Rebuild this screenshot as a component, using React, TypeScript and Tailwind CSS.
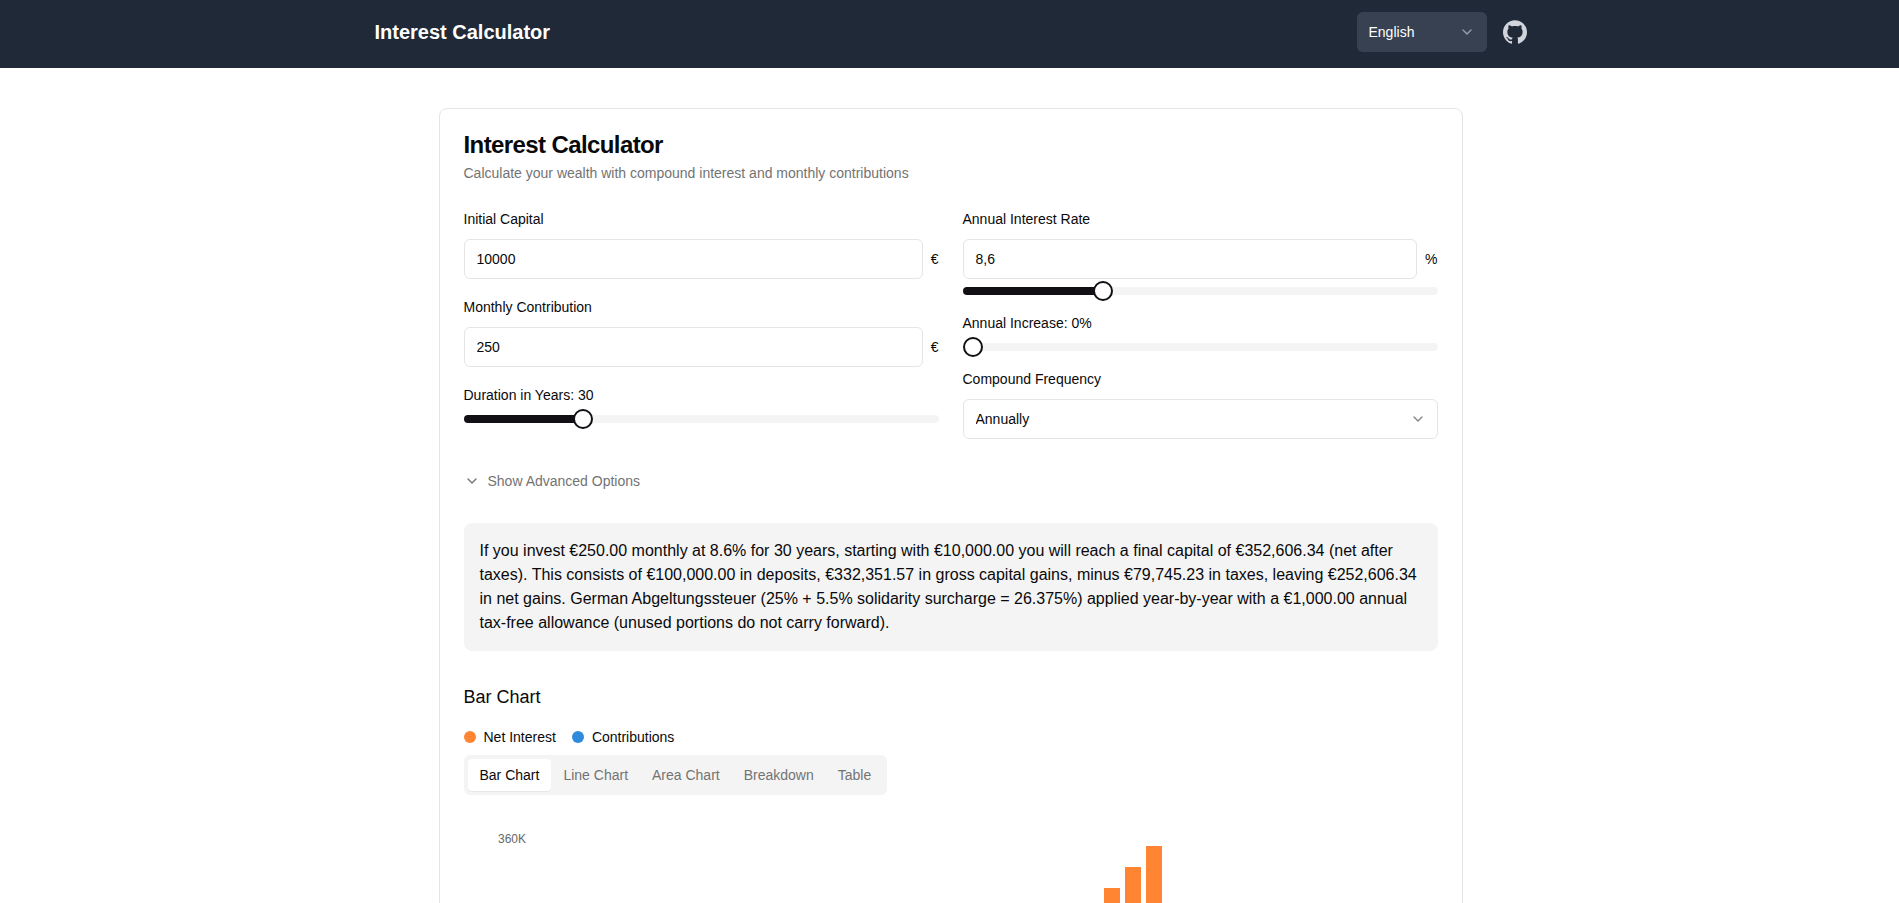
import { useState } from "react";
import type { ReactNode } from "react";
import { ChevronDown } from "lucide-react";

const INITIAL = 10000;
const MONTHLY = 250;
const AXIS_MAX = 360000;
const PLOT_TOP = 28;
const PLOT_HEIGHT = 324;

type YearRow = { year: number; total: number; deposits: number };

function buildRows(): YearRow[] {
  const rows: YearRow[] = [];
  let total = 352606;
  for (let year = 30; year >= 1; year--) {
    rows.unshift({ year, total, deposits: INITIAL + MONTHLY * 12 * year });
    total = (total - 3364) / 1.06332;
  }
  return rows;
}

const rows = buildRows();

function Field({ label, htmlFor, children }: { label: string; htmlFor: string; children: ReactNode }) {
  return (
    <div className="flex flex-col gap-2">
      <div className="flex h-6 items-center">
        <label htmlFor={htmlFor} className="text-sm leading-none">
          {label}
        </label>
      </div>
      {children}
    </div>
  );
}

function NumberInput({ id, value, unit, onChange }: { id: string; value: string; unit: string; onChange: (v: string) => void }) {
  return (
    <div className="flex items-center gap-2">
      <input
        id={id}
        type="text"
        inputMode="decimal"
        value={value}
        onChange={(e) => onChange(e.target.value)}
        className="h-10 min-w-0 flex-1 rounded-md border border-[#e5e5e5] bg-white px-3 py-2 text-sm"
      />
      <span className="text-sm">{unit}</span>
    </div>
  );
}

type SliderProps = { id?: string; label?: string; value: number; max: number; step: number; onChange: (v: number) => void };

function Slider({ id, label, value, max, step, onChange }: SliderProps) {
  const percent = (value / max) * 100;
  const fill = value === 0 ? 0 : percent + 1;
  return (
    <input
      id={id}
      aria-label={label}
      type="range"
      min={0}
      max={max}
      step={step}
      value={value}
      onChange={(e) => onChange(Number(e.target.value))}
      style={{ backgroundImage: `linear-gradient(to right, #121014 ${fill}%, #f4f4f4 ${fill}%)` }}
      className="block h-2 w-full cursor-pointer appearance-none rounded-full [&::-webkit-slider-thumb]:size-5 [&::-webkit-slider-thumb]:appearance-none [&::-webkit-slider-thumb]:rounded-full [&::-webkit-slider-thumb]:border-2 [&::-webkit-slider-thumb]:border-solid [&::-webkit-slider-thumb]:border-[#121014] [&::-webkit-slider-thumb]:bg-white"
    />
  );
}

function GithubMark() {
  return (
    <svg viewBox="0 0 24 24" fill="currentColor" className="size-6" aria-hidden="true">
      <path
        fillRule="evenodd"
        clipRule="evenodd"
        d="M12 .297c-6.63 0-12 5.373-12 12 0 5.303 3.438 9.8 8.205 11.385.6.113.82-.258.82-.577 0-.285-.01-1.04-.015-2.04-3.338.724-4.042-1.61-4.042-1.61C4.422 18.07 3.633 17.7 3.633 17.7c-1.087-.744.084-.729.084-.729 1.205.084 1.838 1.236 1.838 1.236 1.07 1.835 2.809 1.305 3.495.998.108-.776.417-1.305.76-1.605-2.665-.3-5.466-1.332-5.466-5.93 0-1.31.465-2.38 1.235-3.22-.135-.303-.54-1.523.105-3.176 0 0 1.005-.322 3.3 1.23.96-.267 1.98-.399 3-.405 1.02.006 2.04.138 3 .405 2.28-1.552 3.285-1.23 3.285-1.23.645 1.653.24 2.873.12 3.176.765.84 1.23 1.91 1.23 3.22 0 4.61-2.805 5.625-5.475 5.92.42.36.81 1.096.81 2.22 0 1.606-.015 2.896-.015 3.286 0 .315.21.69.825.57C20.565 22.092 24 17.592 24 12.297c0-6.627-5.373-12-12-12"
      />
    </svg>
  );
}

function Header() {
  return (
    <header className="bg-[#1f2937] pt-3 pb-4 pl-0.5 text-white">
      <div className="mx-auto flex max-w-6xl items-center justify-between">
        <span className="text-xl font-semibold">Interest Calculator</span>
        <div className="flex items-center gap-4">
          <div className="grid items-center">
            <select
              aria-label="Language"
              defaultValue="en"
              className="col-start-1 row-start-1 h-10 w-[130px] appearance-none rounded-md bg-[#374151] px-3 text-sm"
            >
              <option value="en">English</option>
              <option value="de">Deutsch</option>
            </select>
            <ChevronDown className="pointer-events-none col-start-1 row-start-1 mr-3 size-4 justify-self-end opacity-50" />
          </div>
          <a href="#github" aria-label="GitHub" className="text-[#d1d5db]">
            <GithubMark />
          </a>
        </div>
      </div>
    </header>
  );
}

function BarChart() {
  const scale = (v: number) => (v / AXIS_MAX) * PLOT_HEIGHT;
  const base = PLOT_TOP + PLOT_HEIGHT;
  return (
    <svg width="710" height="400" role="img" aria-label="Capital by year" className="block" shapeRendering="crispEdges">
      <text x="62" y={PLOT_TOP + 4} textAnchor="end" fill="#666666" className="text-xs">
        360K
      </text>
      {rows.map((row) => {
        const x = 73 + (row.year - 1) * 21;
        return (
          <g key={row.year}>
            <rect x={x} y={base - scale(row.total)} width="16" height={scale(row.total - row.deposits)} fill="#ff8533" />
            <rect x={x} y={base - scale(row.deposits)} width="16" height={scale(row.deposits)} fill="#2f8cdd" />
          </g>
        );
      })}
    </svg>
  );
}

const tabs = ["Bar Chart", "Line Chart", "Area Chart", "Breakdown", "Table"];

export default function App() {
  const [capital, setCapital] = useState("10000");
  const [monthly, setMonthly] = useState("250");
  const [years, setYears] = useState(30);
  const [rate, setRate] = useState(8.6);
  const [increase, setIncrease] = useState(0);

  return (
    <div className="min-h-screen bg-white font-['Liberation_Sans',Arial,sans-serif] text-[#09090b]">
      <Header />
      <main className="py-10 pl-0.5">
        <div className="mx-auto max-w-5xl rounded-lg border border-[#e5e5e5] bg-white p-6">
          <h1 className="text-2xl leading-none font-semibold tracking-tight">Interest Calculator</h1>
          <p className="mt-1.5 text-sm text-[#737373]">
            Calculate your wealth with compound interest and monthly contributions
          </p>

          <div className="mt-6 grid grid-cols-2 gap-6">
            <div className="flex flex-col gap-4">
              <Field label="Initial Capital" htmlFor="capital">
                <NumberInput id="capital" value={capital} unit="€" onChange={setCapital} />
              </Field>
              <Field label="Monthly Contribution" htmlFor="monthly">
                <NumberInput id="monthly" value={monthly} unit="€" onChange={setMonthly} />
              </Field>
              <Field label={`Duration in Years: ${years}`} htmlFor="years">
                <Slider id="years" value={years} max={125} step={1} onChange={setYears} />
              </Field>
            </div>
            <div className="flex flex-col gap-4">
              <Field label="Annual Interest Rate" htmlFor="rate">
                <NumberInput
                  id="rate"
                  value={String(rate).replace(".", ",")}
                  unit="%"
                  onChange={(v) => setRate(Number(v.replace(",", ".")) || 0)}
                />
                <Slider label="Annual Interest Rate slider" value={rate} max={30} step={0.1} onChange={setRate} />
              </Field>
              <Field label={`Annual Increase: ${increase}%`} htmlFor="increase">
                <Slider id="increase" value={increase} max={10} step={0.5} onChange={setIncrease} />
              </Field>
              <Field label="Compound Frequency" htmlFor="frequency">
                <div className="grid items-center">
                  <select
                    id="frequency"
                    defaultValue="annually"
                    className="col-start-1 row-start-1 h-10 w-full appearance-none rounded-md border border-[#e5e5e5] bg-white px-3 text-sm"
                  >
                    <option value="annually">Annually</option>
                    <option value="monthly">Monthly</option>
                  </select>
                  <ChevronDown className="pointer-events-none col-start-1 row-start-1 mr-3 size-4 justify-self-end opacity-50" />
                </div>
              </Field>
            </div>
          </div>

          <button type="button" className="mt-6 flex h-9 items-center gap-2 text-sm text-[#737373]">
            <ChevronDown className="size-4" />
            Show Advanced Options
          </button>

          <p className="mt-6 rounded-lg bg-[#f4f4f4] p-4 text-base">
            If you invest €250.00 monthly at 8.6% for 30 years, starting with €10,000.00 you will reach a final capital of
            €352,606.34 (net after taxes). This consists of €100,000.00 in deposits, €332,351.57 in gross capital gains,
            minus €79,745.23 in taxes, leaving €252,606.34 in net gains. German Abgeltungssteuer (25% + 5.5% solidarity
            surcharge = 26.375%) applied year-by-year with a €1,000.00 annual tax-free allowance (unused portions do not
            carry forward).
          </p>

          <section className="mt-8">
            <h2 className="text-lg font-normal">Bar Chart</h2>
            <div className="mt-4 flex gap-4 text-sm">
              <div className="flex items-center gap-2">
                <span className="size-3 rounded-full bg-[#ff8533]" />
                Net Interest
              </div>
              <div className="flex items-center gap-2">
                <span className="size-3 rounded-full bg-[#2f8cdd]" />
                Contributions
              </div>
            </div>
            <div role="tablist" className="mt-2 inline-flex h-10 items-center rounded-md bg-[#f4f4f4] p-1 text-[#737373]">
              {tabs.map((tab, i) => (
                <button
                  key={tab}
                  type="button"
                  role="tab"
                  aria-selected={i === 0}
                  className="rounded-sm px-3 py-1.5 text-sm whitespace-nowrap aria-selected:bg-white aria-selected:text-[#09090b] aria-selected:shadow-2xs"
                >
                  {tab}
                </button>
              ))}
            </div>
            <div className="mt-4">
              <BarChart />
            </div>
          </section>
        </div>
      </main>
    </div>
  );
}
